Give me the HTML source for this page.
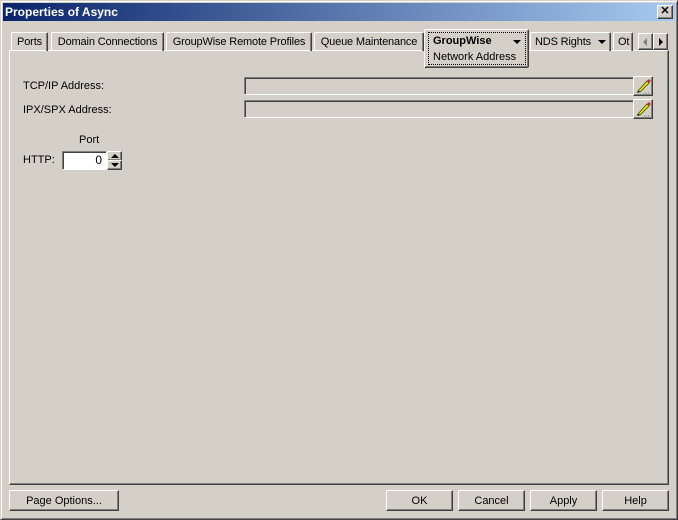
<!DOCTYPE html>
<html><head><style>
*{box-sizing:border-box;margin:0;padding:0}
body{width:678px;height:520px;background:#d4d0c8;font:11px "Liberation Sans",sans-serif;color:#000;position:relative;overflow:hidden}
.a{position:absolute}
.win{left:0;top:0;width:678px;height:520px;border:1px solid;border-color:#d4d0c8 #404040 #404040 #d4d0c8;box-shadow:inset 1px 1px #fff,inset -1px -1px #808080}
.title{left:3px;top:3px;width:672px;height:18px;background:linear-gradient(to right,#0a246a,#a6caf0);color:#fff;font-weight:bold;font-size:12px;line-height:18px;padding-left:2px}
.raised{border:1px solid;border-color:#fff #404040 #404040 #fff;box-shadow:inset -1px -1px #808080}
.sunk{border:1px solid;border-color:#808080 #fff #fff #808080;box-shadow:inset 1px 1px #404040}
.tab{top:32px;height:19px;border:1px solid;border-bottom:none;border-color:#fff #404040 #404040 #fff;box-shadow:inset -1px 0 #808080;line-height:19px;text-align:center;border-radius:2px 2px 0 0;letter-spacing:-0.15px}
.btn{top:490px;height:21px;text-align:center;line-height:21px}
.tri{display:inline-block;width:0;height:0;border-left:4px solid transparent;border-right:4px solid transparent;border-top:4px solid #000;vertical-align:middle}
</style></head><body>
<div class="a win"></div>
<div class="a title">Properties of Async</div>
<div class="a raised" style="left:657px;top:5px;width:16px;height:14px;background:#d4d0c8;color:#000;font-size:11px;font-weight:bold;line-height:11px;text-align:center">✕</div>
<div class="a" style="left:9px;top:50px;width:660px;height:435px;border:1px solid;border-color:#fff #404040 #404040 #fff;box-shadow:inset -1px -1px #808080"></div>
<div class="a tab" style="left:11px;width:37px">Ports</div>
<div class="a tab" style="left:51px;width:113px">Domain Connections</div>
<div class="a tab" style="left:166px;width:146px">GroupWise Remote Profiles</div>
<div class="a tab" style="left:314px;width:110px">Queue Maintenance</div>
<div class="a" style="left:424px;top:29px;width:105px;height:39px;background:#d4d0c8;border:1px solid;border-color:#fff #404040 #404040 #fff;box-shadow:inset -1px -1px #808080;border-radius:2px"></div>
<div class="a" style="left:428px;top:32px;width:98px;height:33px;border:1px dotted #000;padding-left:4px;line-height:16px"><b>GroupWise</b> <span class="tri" style="position:absolute;left:84px;top:7px"></span><br>Network Address</div>
<div class="a tab" style="left:530px;width:81px;text-align:left;padding-left:4px">NDS Rights <span class="tri" style="margin-left:4px"></span></div>
<div class="a tab" style="left:613px;width:20px;text-align:left;padding-left:4px;overflow:hidden">Ot</div>
<div class="a raised" style="left:638px;top:33px;width:15px;height:17px;background:#d4d0c8"><span class="a" style="left:4px;top:4px;border-top:4px solid transparent;border-bottom:4px solid transparent;border-right:4px solid #808080"></span></div>
<div class="a raised" style="left:653px;top:33px;width:15px;height:17px;background:#d4d0c8"><span class="a" style="left:5px;top:4px;border-top:4px solid transparent;border-bottom:4px solid transparent;border-left:4px solid #000"></span></div>
<div class="a" style="left:23px;top:80px">TCP/IP Address:</div>
<div class="a" style="left:23px;top:104px">IPX/SPX Address:</div>
<div class="a sunk" style="left:244px;top:77px;width:390px;height:18px"></div>
<div class="a sunk" style="left:244px;top:100px;width:390px;height:18px"></div>
<div class="a raised" style="left:633px;top:76px;width:20px;height:20px"><svg width="18" height="18" class="a" style="left:0;top:0"><path d="M4 14 L13 4 L15 6 L6 15 Z" fill="#f0f000" stroke="#404000" stroke-width="0.8"/><path d="M13 4 L15 2 L17 4 L15 6Z" fill="#c03030"/><path d="M4 14 L3 16 L6 15Z" fill="#000"/><path d="M10 16h1M12 16h1M14 16h1" stroke="#808080"/></svg></div>
<div class="a raised" style="left:633px;top:99px;width:20px;height:20px"><svg width="18" height="18" class="a" style="left:0;top:0"><path d="M4 14 L13 4 L15 6 L6 15 Z" fill="#f0f000" stroke="#404000" stroke-width="0.8"/><path d="M13 4 L15 2 L17 4 L15 6Z" fill="#c03030"/><path d="M4 14 L3 16 L6 15Z" fill="#000"/><path d="M10 16h1M12 16h1M14 16h1" stroke="#808080"/></svg></div>
<div class="a" style="left:79px;top:134px">Port</div>
<div class="a" style="left:23px;top:154px">HTTP:</div>
<div class="a sunk" style="left:62px;top:151px;width:45px;height:19px;background:#fff;text-align:right;padding-right:4px;line-height:17px;font-size:12px">0</div>
<div class="a raised" style="left:107px;top:151px;width:15px;height:10px;background:#d4d0c8"><span class="a" style="left:3px;top:2px;border-left:4px solid transparent;border-right:4px solid transparent;border-bottom:4px solid #000"></span></div>
<div class="a raised" style="left:107px;top:160px;width:15px;height:10px;background:#d4d0c8"><span class="a" style="left:3px;top:2px;border-left:4px solid transparent;border-right:4px solid transparent;border-top:4px solid #000"></span></div>
<div class="a btn raised" style="left:9px;width:110px">Page Options...</div>
<div class="a btn raised" style="left:386px;width:67px">OK</div>
<div class="a btn raised" style="left:458px;width:67px">Cancel</div>
<div class="a btn raised" style="left:530px;width:67px">Apply</div>
<div class="a btn raised" style="left:602px;width:67px">Help</div>
</body></html>
